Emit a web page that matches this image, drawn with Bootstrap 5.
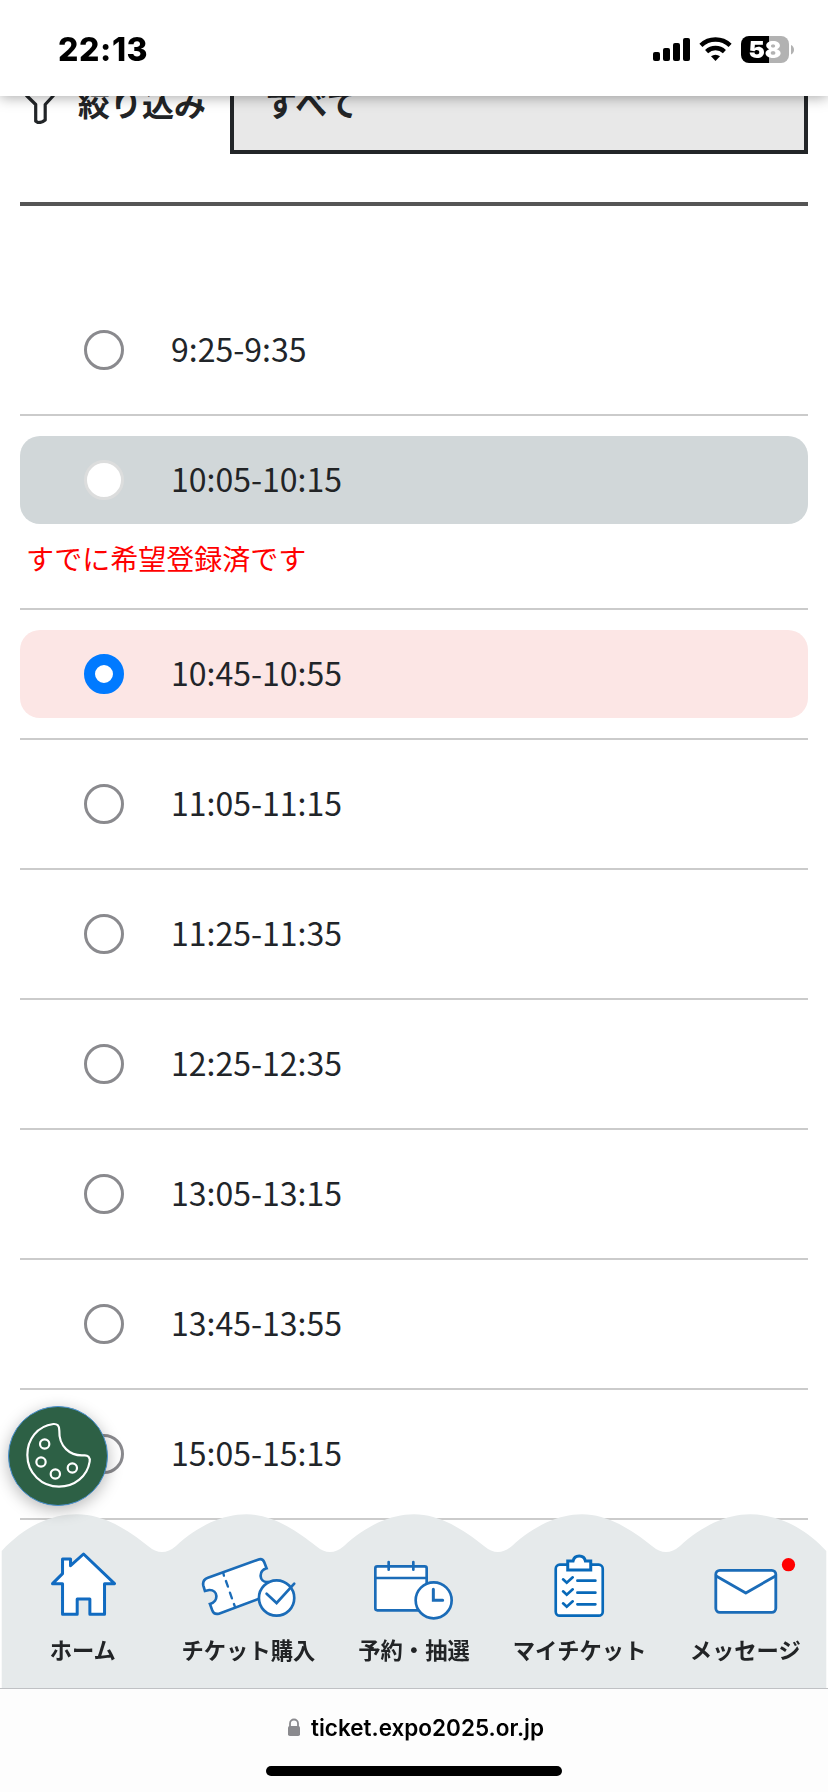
<!DOCTYPE html>
<html lang="ja">
<head>
<meta charset="utf-8">
<meta name="viewport" content="width=device-width, initial-scale=1">
<title>ticket.expo2025.or.jp</title>
<link href="https://cdn.jsdelivr.net/npm/bootstrap@5.3.0/dist/css/bootstrap.min.css" rel="stylesheet">
<style>
  body { font-family: "Noto Sans CJK JP", sans-serif; color: #212529; background: #fff; height: 1792px; overflow: hidden; }
  .ink { color: #222426; }
  svg { display: block; }
  /* status bar */
  .statusbar { height: 96px; padding: 3px 34px 0 58px; box-shadow: 0 1px 13px rgba(0,0,0,.36); }
  .clock { font: 800 32px/1 Inter, sans-serif; color: #000; letter-spacing: .6px; }
  /* page */
  .page { padding: 66px 20px 0; height: 1688px; }
  .filter { height: 88px; font-size: 32px; font-weight: 700; }
  .filter-label { width: 210px; padding: 0 0 17px 4px; }
  .filter-label span { margin-left: 22px; }
  .filter-select { border: 4px solid #222528; background: #e8e8e8; padding: 0 0 17px 31px; border-radius: 0; letter-spacing: .5px; }
  .rule { height: 4px; background: #555; margin: 48px 0 80px; }
  .slot { padding: 20px 0; border-bottom: 2px solid #cbcbcb; }
  .slot label { height: 88px; border-radius: 20px; padding-left: 64px; font-size: 32px; line-height: 1; }
  .slot label span { margin-left: 47px; padding-bottom: 4px; }
  .slot .form-check-input { width: 40px; height: 40px; margin: 0; border: 3px solid #8a8a8e; opacity: 1; background: #fff; box-shadow: none; flex: none; }
  .slot .form-check-input:checked { border: 11px solid #007aff; background: #fff; }
  .slot .form-check-input:disabled { border-color: #dcdddd; opacity: 1; }
  .slot-off { background: #d1d7d9; }
  .slot-on { background: #fce6e5; }
  .note { color: #f00; font-size: 28px; line-height: 64px; height: 64px; padding-left: 6px; margin-top: 2px; margin-bottom: -2px; }
  /* bottom menu */
  .cookie { left: 8px; top: 1406px; width: 100px; height: 100px; z-index: 1040; border-radius: 50%; background: #2d6045; border: 1px solid #4a90d0; box-shadow: 0 4px 16px rgba(0,0,0,.28); padding: 0; }
  .cookie svg { margin: -1px; }
  .wave { margin-bottom: -137px; }
  .menu { height: 136px; }
  .menu a { flex: 1 1 0; color: #222426; font-size: 22.3px; font-weight: 700; line-height: 32px; text-decoration: none; white-space: nowrap; padding-bottom: 23px; }
  .menu svg { margin-bottom: 13px; flex: none; }
  .urlbar { height: 104px; background: #fdfdfd; border-top: 1px solid #bfc1c4; padding-top: 27px; }
  .url { font: 600 22.5px/24px Inter, sans-serif; color: #000; gap: 10px; padding-left: 3px; height: 24px; }
  .homebar { width: 296px; height: 10px; border-radius: 5px; background: #000; margin-top: 26px; }
</style>
</head>
<body>
<header class="statusbar fixed-top bg-white d-flex align-items-center justify-content-between">
  <span class="clock">22:13</span>
  <svg width="142" height="30" viewBox="652 35 142 30">
    <rect x="653" y="52" width="7" height="9" rx="2"/><rect x="663" y="48" width="7" height="13" rx="2"/>
    <rect x="673" y="43" width="7" height="18" rx="2"/><rect x="683" y="38" width="7" height="23" rx="2"/>
    <g fill="none" stroke="#000" stroke-width="4.4">
      <path d="M700.9 45.3a21.2 21.2 0 0 1 29.2 0"/><path d="M706.6 51.6a12.8 12.8 0 0 1 17.8 0"/>
    </g>
    <path d="M711 56.3a7 7 0 0 1 9 0L715.500 61z"/>
    <path d="M769 36h-20a8 8 0 0 0-8 8v11a8 8 0 0 0 8 8h20z"/>
    <path d="M769 36h12a8 8 0 0 1 8 8v11a8 8 0 0 1-8 8h-12z" fill="#b2b2b2"/>
    <path d="M791 45c4 1.500 4 8 0 9.500z" fill="#b2b2b2"/>
    <text x="765" y="58" text-anchor="middle" fill="#fff" font-family="Inter" font-weight="900" font-size="23.500" textLength="33" lengthAdjust="spacingAndGlyphs">58</text>
  </svg>
</header>

<main class="page">
  <div class="filter d-flex ink">
    <div class="filter-label d-flex align-items-center">
      <svg width="32" height="44" viewBox="24 80 32 44" fill="none" stroke="#222528" stroke-width="3.200" stroke-linejoin="round"><path d="M26.500 84h27v11.500l-8.300 9V120q-3 2.500-7 2.700l-2.500-1.500v-16.700L26.500 95.500z"/></svg>
      <span>絞り込み</span>
    </div>
    <div class="filter-select d-flex align-items-center flex-grow-1">すべて</div>
  </div>
  <div class="rule"></div>
  <div class="slot"><label class="d-flex align-items-center"><input class="form-check-input" type="radio" name="t"><span>9:25-9:35</span></label></div>
  <div class="slot"><label class="slot-off d-flex align-items-center"><input class="form-check-input" type="radio" name="t" disabled><span class="ink">10:05-10:15</span></label><div class="note">すでに希望登録済です</div></div>
  <div class="slot"><label class="slot-on d-flex align-items-center"><input class="form-check-input" type="radio" name="t" checked><span>10:45-10:55</span></label></div>
  <div class="slot"><label class="d-flex align-items-center"><input class="form-check-input" type="radio" name="t"><span>11:05-11:15</span></label></div>
  <div class="slot"><label class="d-flex align-items-center"><input class="form-check-input" type="radio" name="t"><span>11:25-11:35</span></label></div>
  <div class="slot"><label class="d-flex align-items-center"><input class="form-check-input" type="radio" name="t"><span>12:25-12:35</span></label></div>
  <div class="slot"><label class="d-flex align-items-center"><input class="form-check-input" type="radio" name="t"><span>13:05-13:15</span></label></div>
  <div class="slot"><label class="d-flex align-items-center"><input class="form-check-input" type="radio" name="t"><span>13:45-13:55</span></label></div>
  <div class="slot"><label class="d-flex align-items-center"><input class="form-check-input" type="radio" name="t"><span>15:05-15:15</span></label></div>
</main>

<button class="cookie position-absolute" aria-label="Cookie">
  <svg width="100" height="100" viewBox="24 78 300 300" fill="none" stroke="#fff" stroke-width="6.500">
    <path d="M160 132C112 138 82 178 82 225C82 280 126 320 177 320C224 320 262 289 269 245C271 232 264 225 252 226C209 229 176 198 178 152C178 137 172 131 160 132Z"/>
    <circle cx="134" cy="192" r="14"/><circle cx="123" cy="246" r="14"/><circle cx="166" cy="282" r="14"/><circle cx="217" cy="264" r="14"/>
  </svg>
</button>

<footer class="fixed-bottom">
  <svg class="wave" width="828" height="175" viewBox="0 1514 828 175" fill="#e6eaeb">
    <path d="M1.700 1689V1551C24 1527 50 1514.300 77 1514.300C104 1514.300 128 1530 148 1546Q162 1558 176 1546C198 1526 222 1514.300 246.500 1514.300C272 1514.300 296 1530 316 1546Q330 1558 344 1546C366 1526 390 1514.300 414 1514.300C440 1514.300 464 1530 484 1546Q498 1558 512 1546C534 1526 558 1514.300 582 1514.300C608 1514.300 632 1530 652 1546Q666 1558 680 1546C702 1526 726 1514.300 750 1514.300C778 1514.300 806 1528 826.300 1551V1689Z"/>
  </svg>
  <div class="position-relative">
  <nav class="menu d-flex" aria-label="menu">
    <a href="#" class="d-flex flex-column align-items-center justify-content-end">
      <svg width="120" height="75" viewBox="68.400 495 360 225" fill="#fff" stroke="#116bc1" stroke-width="9" stroke-linejoin="round"><path d="M250 522L343 611H313V703H269V657H231V703H187V611H157L187 581V537H211V557Z"/></svg>
      <span>ホーム</span></a>
    <a href="#" class="d-flex flex-column align-items-center justify-content-end">
      <svg width="120" height="75" viewBox="85.200 165 360 225" fill="#fff" stroke="#1b6cb8" stroke-width="8" stroke-linecap="round">
        <path d="M145 263L295 209Q309 204 314 217L321 235C295 243 299 277 323 276L320 318L178 371Q163 375 158 361L151 342C179 334 175 299 149 300L136 303L131 286Q128 269 145 263Z"/>
        <path d="M191 249L193 257M199 273L205 290M211 308L217 325M223 342L226 350" stroke-width="7"/>
        <circle cx="351" cy="324" r="53"/><path d="M321 311L351 339L404 281" fill="none"/></svg>
      <span>チケット購入</span></a>
    <a href="#" class="d-flex flex-column align-items-center justify-content-end">
      <svg width="120" height="75" viewBox="582 165 360 225" fill="#fff" stroke="#1b6cb8" stroke-width="8" stroke-linecap="round">
        <rect x="646" y="229" width="154" height="132" rx="6"/><path d="M646 264H800M686 216V239M760 216V239"/>
        <circle cx="821" cy="331" r="54"/><path d="M820 298V331H848" fill="none" stroke-width="9"/></svg>
      <span>予約・抽選</span></a>
    <a href="#" class="d-flex flex-column align-items-center justify-content-end">
      <svg width="120" height="75" viewBox="88.800 165 360 225" fill="#fff" stroke="#0869b9" stroke-width="8" stroke-linecap="round">
        <rect x="196" y="224" width="141" height="153" rx="12"/>
        <path d="M232 240V213H248C252 193 281 193 285 213H301V240Z" stroke-width="9"/>
        <path d="M218 268L229 278L247 262M261 272H315M218 304L229 314L247 298M261 308H315M218 340L229 350L247 334M261 343H315" fill="none"/></svg>
      <span>マイチケット</span></a>
    <a href="#" class="d-flex flex-column align-items-center justify-content-end">
      <svg width="120" height="75" viewBox="585.600 165 360 225" overflow="visible" fill="#fff" stroke="#1b6cb8" stroke-width="8.500" stroke-linejoin="round">
        <rect x="678" y="241" width="180" height="126" rx="12"/><path d="M679 258L768 309L857 258" fill="none"/>
        <circle cx="896" cy="224" r="20" fill="#f00" stroke="none"/></svg>
      <span>メッセージ</span></a>
  </nav>
  <div class="urlbar">
    <div class="url d-flex align-items-center justify-content-center">
      <svg width="14" height="20" viewBox="0 0 14 20"><path d="M3 9V5.500a4 4 0 0 1 8 0V9" fill="none" stroke="#8a8a8e" stroke-width="1.800"/><rect x="1" y="8" width="12" height="10" rx="1.800" fill="#8a8a8e"/></svg>
      <span>ticket.expo2025.or.jp</span>
    </div>
    <div class="homebar mx-auto"></div>
  </div>
  </div>
</footer>
<script src="https://cdn.jsdelivr.net/npm/bootstrap@5.3.0/dist/js/bootstrap.bundle.min.js"></script>
</body>
</html>
